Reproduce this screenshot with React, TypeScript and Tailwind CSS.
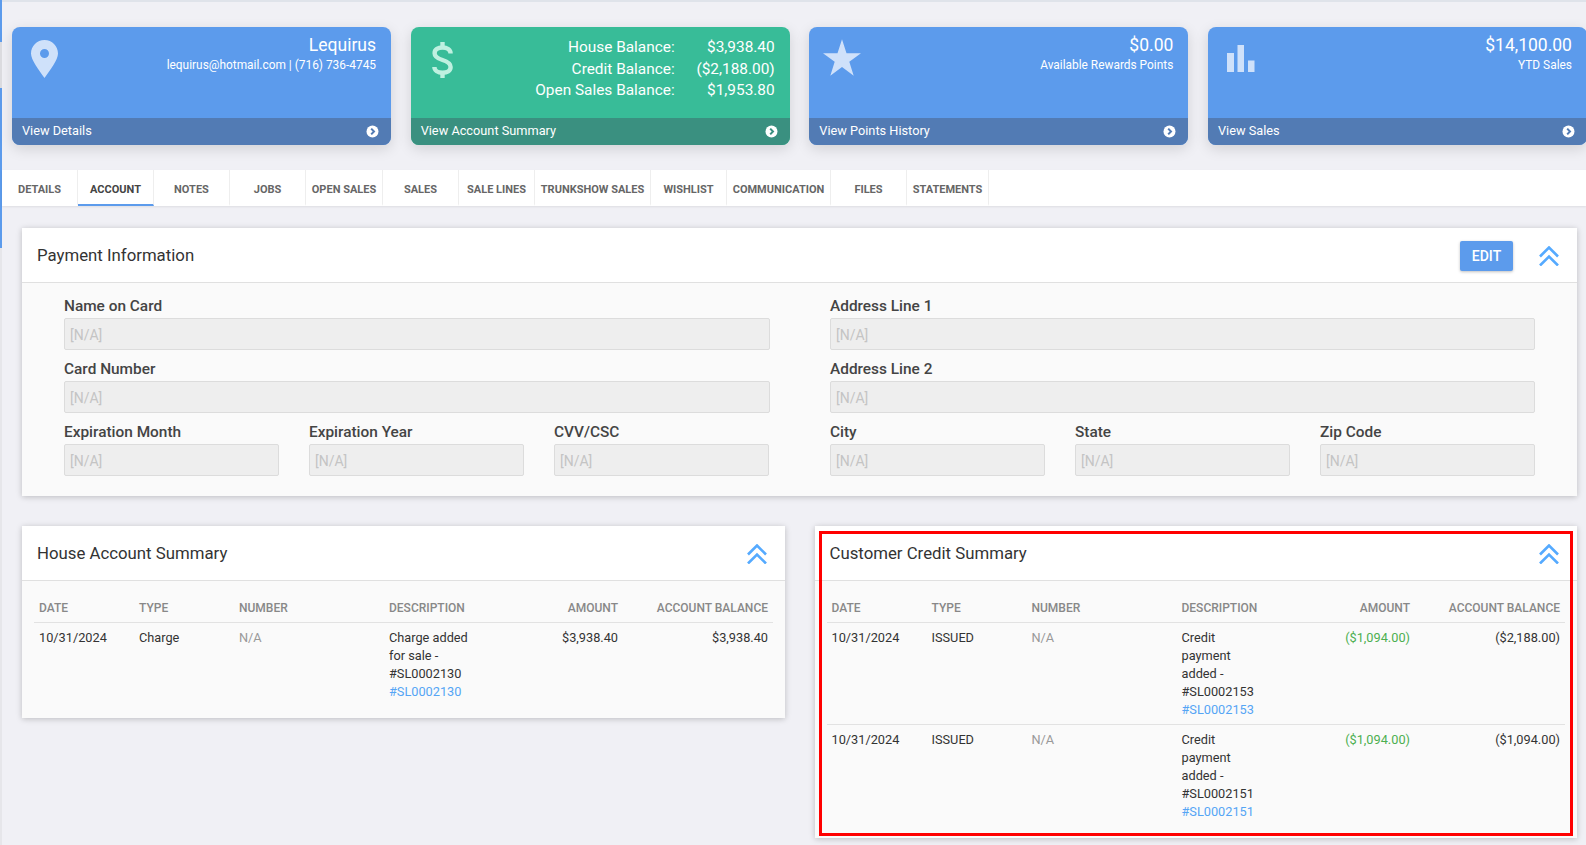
import React from 'react'

const tabs = [
  { label: 'Details', w: 'w-[76px]' },
  { label: 'Account', w: 'w-[76px]', active: true },
  { label: 'Notes', w: 'w-[76px]' },
  { label: 'Jobs', w: 'w-[76px]' },
  { label: 'Open Sales', w: 'w-[77px]' },
  { label: 'Sales', w: 'w-[76px]' },
  { label: 'Sale Lines', w: 'w-[76px]' },
  { label: 'Trunkshow Sales', w: 'w-[116px]' },
  { label: 'Wishlist', w: 'w-[76px]' },
  { label: 'Communication', w: 'w-[104px]' },
  { label: 'Files', w: 'w-[76px]' },
  { label: 'Statements', w: 'w-[82px]' },
]

const Collapse = () => (
  <svg width="20" height="20" viewBox="0 0 20 20" fill="none" stroke="#55aaff" strokeWidth="2.6" className="shrink-0">
    <path d="M1 10.5L10 1.5l9 9" />
    <path d="M1 19.5L10 10.5l9 9" />
  </svg>
)

const Arrow = ({ color }: { color: string }) => (
  <svg width="13" height="13" viewBox="0 0 13 13" className="shrink-0">
    <circle cx="6.5" cy="6.5" r="6" fill="#fff" />
    <path d="M5.2 3.6L8 6.5 5.2 9.4" fill="none" stroke={color} strokeWidth="2" />
  </svg>
)

const Stat = ({ bg, foot, icon, link, arrow, children }: { bg: string; foot: string; icon: React.ReactNode; link: string; arrow: string; children: React.ReactNode }) => (
  <div className={`w-[379px] h-[118px] shrink-0 rounded-[8px] overflow-hidden flex flex-col text-white shadow-[0_4px_14px_rgba(0,0,0,0.13)] ${bg}`}>
    <div className="flex-1 flex justify-between items-start pr-[15px]">
      {icon}
      {children}
    </div>
    <div className={`h-[27px] pb-[1px] flex items-center justify-between pl-[10px] pr-[12px] text-[12.75px] ${foot}`}>
      <span>{link}</span>
      <Arrow color={arrow} />
    </div>
  </div>
)

const Field = ({ label }: { label: string }) => (
  <div className="mb-[9px]">
    <div className="h-[20px] mb-[2px] leading-[20px] text-[15.4px] font-medium text-[#444]">{label}</div>
    <div className="h-[32px] pl-[5px] pt-[2px] flex items-center bg-[#eeeeee] border border-[#dcdcdc] rounded-[2px] text-[14px] text-[#c4c4c4]">[N/A]</div>
  </div>
)

const Panel = ({ title, right, children }: { title: string; right?: React.ReactNode; children: React.ReactNode }) => (
  <div className="bg-[#fafafa] shadow-[0_1px_6px_rgba(0,0,0,0.22)]">
    <div className="h-[55px] pt-[2px] bg-white border-b border-[#e0e0e0] flex items-center justify-between pl-[15px] pr-[18px]">
      <span className="text-[16.8px] text-[#333]">{title}</span>
      <div className="flex items-center gap-[26px]">{right}<Collapse /></div>
    </div>
    {children}
  </div>
)

type Row = { date: string; type: string; desc: string; ref: string; amount: string; balance: string; green?: boolean }

const Summary = ({ rows }: { rows: Row[] }) => (
  <div className="px-[12px] pb-[12px]">
    <table className="w-full table-fixed border-collapse text-[12.75px] leading-[18px] text-[#333]">
      <thead>
        <tr className="border-b border-[#e2e2e2] text-[12px] font-medium text-[#888] uppercase">
          <th className="w-[100px] pl-[5px] pt-[18px] pb-[5px] text-left font-medium">Date</th>
          <th className="w-[100px] pl-[5px] pt-[18px] pb-[5px] text-left font-medium">Type</th>
          <th className="w-[150px] pl-[5px] pt-[18px] pb-[5px] text-left font-medium">Number</th>
          <th className="pl-[5px] pt-[18px] pb-[5px] text-left font-medium">Description</th>
          <th className="w-[100px] pr-[5px] pt-[18px] pb-[5px] text-right font-medium">Amount</th>
          <th className="w-[150px] pr-[5px] pt-[18px] pb-[5px] text-right font-medium">Account Balance</th>
        </tr>
      </thead>
      <tbody>
        {rows.map((r, i) => (
          <tr key={i} className="border-b border-[#e2e2e2] last:border-b-0 align-top">
            <td className="pl-[5px] pt-[6px] pb-[5px]">{r.date}</td>
            <td className="pl-[5px] pt-[6px] pb-[5px]">{r.type}</td>
            <td className="pl-[5px] pt-[6px] pb-[5px] text-[#999]">N/A</td>
            <td className="pl-[5px] pt-[6px] pb-[5px]">
              <div className="w-[84px]">{r.desc}</div>
              <div className="text-[#55a5f5]">{r.ref}</div>
            </td>
            <td className={`pr-[5px] pt-[6px] pb-[5px] text-right ${r.green ? 'text-[#4caf50]' : ''}`}>{r.amount}</td>
            <td className="pr-[5px] pt-[6px] pb-[5px] text-right">{r.balance}</td>
          </tr>
        ))}
      </tbody>
    </table>
  </div>
)

const App: React.FC = () => {
  return (
    <div className="w-[1586px] h-[845px] overflow-hidden flex bg-[#f0f0f5] [font-family:Roboto,sans-serif]">
      {/* sidebar edge */}
      <div className="w-[2px] shrink-0 flex flex-col">
        <div className="h-[42px] bg-[#5c9bec]" />
        <div className="h-[46px] bg-[#dcdce0]" />
        <div className="h-[160px] bg-[#5c9bec]" />
        <div className="flex-1 bg-[#e6e6ea]" />
      </div>

      <div className="flex-1 min-w-0">
        <div className="h-[2px] bg-[#dfe3ea]" />

        <div className="flex gap-[19.67px] pl-[10px] mt-[25px]">
          <Stat bg="bg-[#5c9bec]" foot="bg-[#527bb4]" link="View Details" arrow="#527bb4"
            icon={
              <svg width="27" height="38" viewBox="0 0 27 38" className="ml-[19px] mt-[13px] shrink-0">
                <path fillRule="evenodd" fill="#cfe1fa" d="M13.5 0C6 0 0 6 0 13.5 0 20 8 30 13.5 38 19 30 27 20 27 13.5 27 6 21 0 13.5 0zm0 9a4.5 4.5 0 1 1 0 9 4.5 4.5 0 0 1 0-9z" />
              </svg>
            }>
            <div className="text-right pt-[7px]">
              <div className="text-[17.5px] leading-[22px]">Lequirus</div>
              <div className="text-[11.9px] leading-[18px]">lequirus@hotmail.com | (716) 736-4745</div>
            </div>
          </Stat>

          <Stat bg="bg-[#38bc98]" foot="bg-[#3a9080]" link="View Account Summary" arrow="#3a9080"
            icon={
              <svg width="21" height="36" viewBox="0 0 21 36" fill="none" stroke="#bff0e0" strokeWidth="4.4" className="ml-[21px] mt-[15px] shrink-0">
                <path d="M10.5 0v5M10.5 31v5" />
                <path d="M18.6 11.500c0-3.700-3.600-6-8.100-6S2.600 7.400 2.600 11.200s3.500 5.400 7.900 6.800 8.100 3 8.100 7-3.600 5.800-8.100 5.800-8.100-2.300-8.100-5.800" />
              </svg>
            }>
            <div className="pt-[10px] text-[15.4px] leading-[21.7px] grid grid-cols-[auto_100px] text-right">
              <span>House Balance:</span><span>$3,938.40</span>
              <span>Credit Balance:</span><span>($2,188.00)</span>
              <span>Open Sales Balance:</span><span>$1,953.80</span>
            </div>
          </Stat>

          <Stat bg="bg-[#5c9bec]" foot="bg-[#527bb4]" link="View Points History" arrow="#527bb4"
            icon={
              <svg width="38" height="37" viewBox="0 0 38 36.4" className="ml-[13.500px] mt-[12px] shrink-0">
                <polygon fill="#cfe1fa" points="19,0 23.5,14 38,14 26.3,22.5 30.7,36.4 19,27.8 7.3,36.4 11.7,22.5 0,14 14.5,14" />
              </svg>
            }>
            <div className="text-right pt-[7px]">
              <div className="text-[17.5px] leading-[22px]">$0.00</div>
              <div className="text-[11.9px] leading-[18px]">Available Rewards Points</div>
            </div>
          </Stat>

          <Stat bg="bg-[#5c9bec]" foot="bg-[#527bb4]" link="View Sales" arrow="#527bb4"
            icon={
              <svg width="28" height="27" viewBox="0 0 28 27" className="ml-[19px] mt-[18px] shrink-0" fill="#cfe1fa">
                <rect x="0" y="8" width="7" height="19" />
                <rect x="10.5" y="0" width="6.500" height="27" />
                <rect x="21" y="15.5" width="6.500" height="11.5" />
              </svg>
            }>
            <div className="text-right pt-[7px]">
              <div className="text-[17.5px] leading-[22px]">$14,100.00</div>
              <div className="text-[11.9px] leading-[18px]">YTD Sales</div>
            </div>
          </Stat>
        </div>

        {/* tabs */}
        <div className="mt-[25px] h-[36px] bg-white flex shadow-[0_1px_2px_rgba(0,0,0,0.08)]">
          {tabs.map(t => (
            <div key={t.label} className={`${t.w} shrink-0 flex items-center justify-center pt-[6px] border-r border-b-2 border-r-[#eeeeee] text-[11px] font-bold uppercase whitespace-nowrap ${t.active ? 'text-[#444] border-b-[#5c9bec]' : 'text-[#666] border-b-transparent'}`}>
              {t.label}
            </div>
          ))}
        </div>

        {/* payment */}
        <div className="mt-[22px] ml-[20px] mr-[9px]">
          <Panel title="Payment Information" right={
            <button type="button" className="w-[53px] h-[30px] bg-[#5c9bec] text-white text-[14px] font-medium rounded-[2px] shadow-[0_1px_3px_rgba(0,0,0,0.25)]">EDIT</button>
          }>
            <div className="grid grid-cols-[706px_705px] gap-x-[60px] pl-[42px] pt-[13px] pb-[11px]">
              <div>
                <Field label="Name on Card" />
                <Field label="Card Number" />
                <div className="w-[705px] grid grid-cols-3 gap-x-[30px]">
                  <Field label="Expiration Month" />
                  <Field label="Expiration Year" />
                  <Field label="CVV/CSC" />
                </div>
              </div>
              <div>
                <Field label="Address Line 1" />
                <Field label="Address Line 2" />
                <div className="grid grid-cols-3 gap-x-[30px]">
                  <Field label="City" />
                  <Field label="State" />
                  <Field label="Zip Code" />
                </div>
              </div>
            </div>
          </Panel>
        </div>

        {/* summaries */}
        <div className="mt-[30px] ml-[20px] grid grid-cols-[763px_762.5px] gap-x-[29.5px] items-start">
          <Panel title="House Account Summary">
            <Summary rows={[
              { date: '10/31/2024', type: 'Charge', desc: 'Charge added for sale - #SL0002130', ref: '#SL0002130', amount: '$3,938.40', balance: '$3,938.40' },
            ]} />
          </Panel>
          <div className="relative">
            <Panel title="Customer Credit Summary">
              <Summary rows={[
                { date: '10/31/2024', type: 'ISSUED', desc: 'Credit payment added - #SL0002153', ref: '#SL0002153', amount: '($1,094.00)', balance: '($2,188.00)', green: true },
                { date: '10/31/2024', type: 'ISSUED', desc: 'Credit payment added - #SL0002151', ref: '#SL0002151', amount: '($1,094.00)', balance: '($1,094.00)', green: true },
              ]} />
            </Panel>
            {/* red annotation box */}
            <div className="absolute left-[4.5px] right-[4px] top-[5px] bottom-[2px] border-[3px] border-[#ff0000] pointer-events-none" />
          </div>
        </div>
      </div>
    </div>
  )
}

export default App
